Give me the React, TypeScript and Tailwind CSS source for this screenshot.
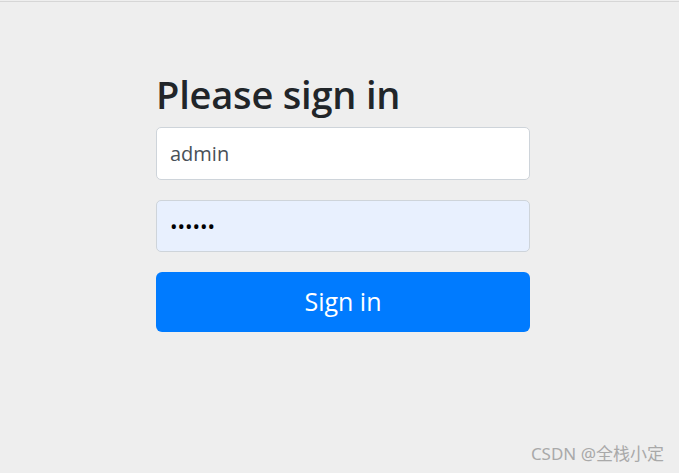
export default function App() {
  return (
    <div className="relative h-[473px] w-full overflow-hidden bg-[#eeeeee] pt-px font-['Open_Sans',sans-serif]">
      <div className="h-full border-t border-[#d6d6d6]">
        <form className="ml-[156px] flex w-[374px] flex-col pt-[68px]">
          <h2 className="mb-[9px] text-[38px] leading-[48px] font-semibold tracking-[-0.2px] text-[#212529]">Please sign in</h2>
          <input
            type="text"
            defaultValue="admin"
            className="h-[53px] rounded-[5px] border border-[#ced4da] bg-white px-[13px] text-[20px] text-[#495057] outline-none"
          />
          <input
            type="password"
            defaultValue="123456"
            className="mt-[20px] h-[52px] rounded-[5px] border border-[#ced4da] bg-[#e8f0fe] px-[13px] text-[20px] text-black outline-none"
          />
          <button
            type="button"
            className="mt-[20px] h-[60px] rounded-[6px] bg-[#007bff] text-[25px] text-white"
          >
            Sign in
          </button>
        </form>
      </div>
      <div className="absolute right-[15px] bottom-[7px] font-['Noto_Sans','Noto_Sans_CJK_SC',sans-serif] text-[17px] text-[#a9a9a9]">
        CSDN @全栈小定
      </div>
    </div>
  );
}
